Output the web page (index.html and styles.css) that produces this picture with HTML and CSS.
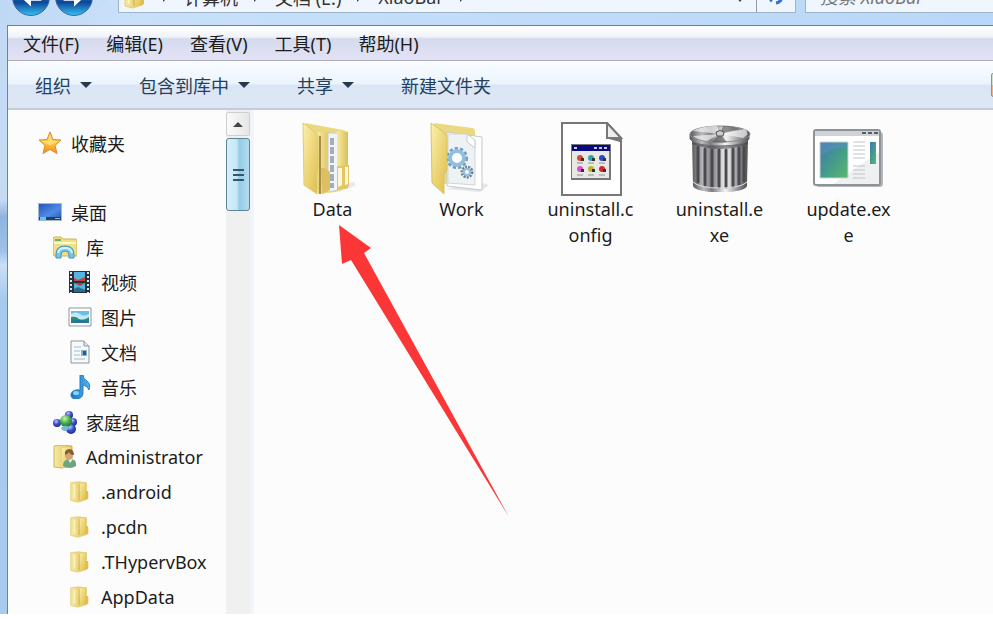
FILE: index.html
```html
<!DOCTYPE html>
<html lang="zh-CN">
<head>
    <meta charset="UTF-8">
    <meta name="viewport" content="width=device-width, initial-scale=1.0">
    <title>XiaoBar</title>
    <link rel="stylesheet" href="styles.css">
</head>
<body>
    <svg class="defs" aria-hidden="true">
        <defs>
            <linearGradient id="gold" x1="0" x2="1" y1="0" y2="1">
                <stop offset="0" stop-color="#fbf1ac"/>
                <stop offset="1" stop-color="#dfbc49"/>
            </linearGradient>
            <linearGradient id="gold-side" x1="0" x2="1">
                <stop offset="0" stop-color="#f8eaa0"/>
                <stop offset="1" stop-color="#d9bf5c"/>
            </linearGradient>
            <linearGradient id="star" x1="0" x2="0" y1="0" y2="1">
                <stop offset="0" stop-color="#ffd75a"/>
                <stop offset="0.5" stop-color="#ffc83c"/>
                <stop offset="1" stop-color="#f08a1c"/>
            </linearGradient>
            <linearGradient id="blue" x1="0" x2="1" y1="0" y2="1">
                <stop offset="0" stop-color="#2555b8"/>
                <stop offset="0.6" stop-color="#4f8be6"/>
                <stop offset="1" stop-color="#2760c0"/>
            </linearGradient>
            <linearGradient id="note" x1="0" x2="1">
                <stop offset="0" stop-color="#1672c8"/>
                <stop offset="1" stop-color="#4fb4ef"/>
            </linearGradient>
            <linearGradient id="steel" x1="0" x2="1">
                <stop offset="0" stop-color="#5a5a5c"/>
                <stop offset="0.2" stop-color="#bcbcbe"/>
                <stop offset="0.35" stop-color="#7c7c80"/>
                <stop offset="0.6" stop-color="#f4f4f4"/>
                <stop offset="0.82" stop-color="#96969a"/>
                <stop offset="1" stop-color="#505052"/>
            </linearGradient>
            <linearGradient id="scene" x1="0" x2="1" y1="0" y2="1">
                <stop offset="0" stop-color="#4577ae"/>
                <stop offset="0.5" stop-color="#439a8b"/>
                <stop offset="1" stop-color="#5cb86b"/>
            </linearGradient>
            <radialGradient id="ball" cx="0.4" cy="0.3" r="0.7">
                <stop offset="0" stop-color="#b9c6ff"/>
                <stop offset="0.5" stop-color="#3f55c8"/>
                <stop offset="1" stop-color="#1c2a8c"/>
            </radialGradient>
            <radialGradient id="ball-green" cx="0.4" cy="0.3" r="0.7">
                <stop offset="0" stop-color="#c8f5b0"/>
                <stop offset="0.6" stop-color="#3fa845"/>
                <stop offset="1" stop-color="#1f7a30"/>
            </radialGradient>
            <symbol id="i-folder" viewBox="0 0 24 26">
                <path d="M2 3l8-1 9 1v18l-9 3-8-2z" fill="url(#gold-side)" stroke="#e3ce7a"/>
                <path d="M10 4l8-1v17l-5 3-3 1z" fill="url(#gold)"/>
                <path d="M18 12h2q1 0 1 2v6l-3 2z" fill="#e2bd4d"/>
                <path d="M11 4v18" stroke="#d2a63b" stroke-width="1"/>
                <path d="M6 5v15" stroke="#fff9cf" stroke-width="2" opacity="0.7"/>
            </symbol>
        </defs>
    </svg>

    <div class="window">
        <header class="titlebar">
            <div class="nav-row">
                <button class="nav-btn" type="button" aria-label="后退">
                    <svg viewBox="0 0 38 38"><path d="M8 19l11-10v6h11v8H19v6z" fill="#fff"/></svg>
                </button>
                <button class="nav-btn" type="button" aria-label="前进">
                    <svg viewBox="0 0 38 38"><path d="M30 19L19 9v6H8v8h11v6z" fill="#fff"/></svg>
                </button>
                <button class="history-btn" type="button" aria-label="最近页面">
                    <svg viewBox="0 0 10 8"><path d="M0 1h10L5 7z" fill="#2f6aa8"/></svg>
                </button>
                <nav class="address" aria-label="地址">
                    <svg class="address-icon"><use href="#i-folder"/></svg>
                    <span class="sep"></span>
                    <a href="#computer">计算机</a>
                    <span class="sep"></span>
                    <a href="#drive">文档 (E:)</a>
                    <span class="sep"></span>
                    <a href="#xiaobar">XiaoBar</a>
                    <span class="sep"></span>
                    <button class="address-drop" type="button" aria-label="以前的位置">
                        <svg viewBox="0 0 10 8"><path d="M1 1h8L5 6z" fill="#444"/></svg>
                    </button>
                    <button class="refresh" type="button" aria-label="刷新">
                        <svg viewBox="0 0 20 20"><path d="M3 7q1-5 7-5M2 11l3 4 3-4M10 18q6-1 6-8M12 10l4-4 3 4" fill="none" stroke="#3274c4" stroke-width="3"/></svg>
                    </button>
                </nav>
                <input class="search" type="search" placeholder="搜索 XiaoBar" aria-label="搜索 XiaoBar">
            </div>
        </header>

        <div class="client">
            <div class="menubar">
                <button type="button">文件(F)</button>
                <button type="button">编辑(E)</button>
                <button type="button">查看(V)</button>
                <button type="button">工具(T)</button>
                <button type="button">帮助(H)</button>
            </div>

            <div class="toolbar">
                <button type="button">组织<span class="caret"></span></button>
                <button type="button">包含到库中<span class="caret"></span></button>
                <button type="button">共享<span class="caret"></span></button>
                <button type="button">新建文件夹</button>
                <button class="view-btn" type="button" aria-label="更改视图"></button>
            </div>

            <div class="panes">
                <aside class="sidebar">
                    <ul class="tree">
                        <li class="level-0 favorites"><a href="#favorites">
                            <svg viewBox="0 0 24 24"><path d="M12 1l3 7.500 8 .5-6 5.500 2 8-7-4-7 4 2-8L1 9l8-.5z" fill="url(#star)" stroke="#dd8a34"/><path d="M12 4l2 6 6 .5-8 4-7-4 5-.5z" fill="#ffed9a" opacity="0.6"/></svg>
                            收藏夹</a></li>
                        <li class="level-0"><a href="#desktop">
                            <svg viewBox="0 0 24 24"><path d="M0 3h24v18H0z" fill="#a6b8cf"/><path d="M1 4h22v14H1z" fill="url(#blue)"/><path d="M1 17h22v3H1z" fill="#25405c"/><path d="M2 17h6v3H2z" fill="#5fc4ee"/><path d="M17 18h5v1h-5z" fill="#9db4c9"/></svg>
                            桌面</a></li>
                        <li class="level-1"><a href="#libraries">
                            <svg viewBox="0 0 24 24"><path d="M0 4q0-2 2-2h6l2 2h12q2 0 2 2v15H2q-2 0-2-2z" fill="#f3df83" stroke="#c9b45b"/><path d="M2 4h6v2H2z" fill="#6cb56b"/><path d="M1 8h22" stroke="#fff8cc" stroke-width="2"/><path d="M3 23v-4q0-8 9-8t9 8v4h-5v-3q0-4-4-4t-4 4v3z" fill="#77c6e8" stroke="#3f97c4"/><path d="M5 18q1-5 7-5t7 5" stroke="#d5f1fc" stroke-width="2" fill="none"/></svg>
                            库</a></li>
                        <li class="level-2"><a href="#videos">
                            <svg viewBox="0 0 24 24"><path d="M1 1h21v22H1z" fill="#25333d"/><path d="M6 2h11v9H6zM6 13h11v9H6z" fill="#55b4e0"/><path d="M6 8l4 2 7-3v4H6z" fill="#c1453b"/><path d="M6 13h11l-5 3z" fill="#a8444a"/><path d="M6 19l4-2 7 3v2H6z" fill="#2c6b8f"/><path d="M3 2v21M20 2v21" stroke="#dce8ee" stroke-width="2" stroke-dasharray="2 2"/></svg>
                            视频</a></li>
                        <li class="level-2"><a href="#pictures">
                            <svg viewBox="0 0 24 24"><path d="M1 3h22v18H1z" fill="#fff" stroke="#8e979f"/><path d="M3 6h18v12H3z" fill="#67bfe9"/><path d="M3 9q5-3 9 0t9 0v5H3z" fill="#c3e8f8"/><path d="M3 12q5-1 8 2t10-2v6H3z" fill="#2c8e74"/><path d="M3 16q8-2 18 0v2H3z" fill="#2475a0"/></svg>
                            图片</a></li>
                        <li class="level-2"><a href="#documents">
                            <svg viewBox="0 0 24 24"><path d="M3 1h13l5 5v17H3z" fill="#f6f9fb" stroke="#8c979f"/><path d="M16 1v5h5" fill="#dfe5e9" stroke="#8c979f"/><path d="M6 7h7M6 11h6M6 15h6M6 19h11" stroke="#a8b9c6"/><path d="M13 10h6v6h-6z" fill="#86b5c9"/><path d="M15 11h3v4h-3z" fill="#285d84"/></svg>
                            文档</a></li>
                        <li class="level-2"><a href="#music">
                            <svg viewBox="0 0 24 24"><path d="M12 0h3q0 4 4 6 4 3 2 9-1-4-6-5v8q0 5-6 6-7 0-6-5 2-5 9-4z" fill="url(#note)" stroke="#2a7fc0"/><ellipse cx="8" cy="18" rx="3" ry="2" fill="#8ad5fa"/></svg>
                            音乐</a></li>
                        <li class="level-1"><a href="#homegroup">
                            <svg viewBox="0 0 24 24"><circle cx="16" cy="5" r="4" fill="url(#ball)"/><circle cx="4" cy="13" r="4" fill="url(#ball)"/><circle cx="20" cy="12" r="4" fill="url(#ball)"/><circle cx="18" cy="19" r="5" fill="url(#ball)"/><circle cx="13" cy="11" r="6" fill="url(#ball-green)"/><path d="M8 18q3-4 8-1-1 4-4 4t-4-3z" fill="#74b8d8"/></svg>
                            家庭组</a></li>
                        <li class="level-1"><a href="#administrator">
                            <svg viewBox="0 0 24 24"><path d="M1 1l8-1 10 1v20L9 23l-8-1z" fill="url(#gold-side)" stroke="#cfb75e"/><path d="M9 3l9-1v19l-9 2z" fill="url(#gold)"/><path d="M10 21q0-7 7-7t6 7q-6 4-13 0z" fill="#6da67a"/><path d="M15 14l2 4 3-4z" fill="#e6f0f4"/><ellipse cx="16" cy="10" rx="4" ry="5" fill="#d4a579"/><path d="M12 10q-1-6 5-6 4 1 4 6-4 0-5-3-1 2-4 3z" fill="#855b34"/></svg>
                            Administrator</a></li>
                        <li class="level-2"><a href="#android"><svg><use href="#i-folder"/></svg>.android</a></li>
                        <li class="level-2"><a href="#pcdn"><svg><use href="#i-folder"/></svg>.pcdn</a></li>
                        <li class="level-2"><a href="#thypervbox"><svg><use href="#i-folder"/></svg>.THypervBox</a></li>
                        <li class="level-2"><a href="#appdata"><svg><use href="#i-folder"/></svg>AppData</a></li>
                    </ul>
                    <div class="scrollbar">
                        <button class="scroll-up" type="button" aria-label="向上滚动"></button>
                        <div class="thumb"><span></span><span></span><span></span></div>
                    </div>
                </aside>

                <main class="files">
                    <ul class="file-list">
                        <li><a href="#data">
                            <svg viewBox="0 0 72 74">
                                <path d="M40 64l18-4v4l-16 6z" fill="#d9dcdf" opacity="0.6"/>
                                <path d="M8 1l38 7q3 0 3 4v54l-10 4-18 2z" fill="#ead880"/>
                                <path d="M20 10h12q2 0 2 3v55l-10 4z" fill="url(#gold-side)"/>
                                <path d="M23 14v58" stroke="#a68f4d" stroke-width="2"/>
                                <path d="M31 11h10v57l-10 2z" fill="#f1f4f6" stroke="#c9ced2"/>
                                <path d="M35 16v50" stroke="#a3aebb" stroke-width="4" stroke-dasharray="7 2"/>
                                <path d="M40 9h7l4 1v56l-11 3z" fill="url(#gold-side)"/>
                                <path d="M40 44l12-1v21l-12 5z" fill="#e4c762"/>
                                <path d="M41 46h4v17l-4 2zM48 45h3v17l-3 1z" fill="#fff8dc"/>
                                <path d="M24 46h4l5 4v18l-8 4z" fill="#ddc061"/>
                                <path d="M6 1l13 10q2 1 2 5v29l-1 6v21L7 63z" fill="url(#gold)" stroke="#e2cb74"/>
                            </svg>
                            <span>Data</span></a></li>
                        <li><a href="#work">
                            <svg viewBox="0 0 72 74">
                                <path d="M8 1l38 5q3 0 3 4v52H16z" fill="#ebd982"/>
                                <path d="M54 60l9 3-9 7-35-3z" fill="#d4d7db" opacity="0.6"/>
                                <path d="M21 10l35 5v53l-35-4z" fill="#fff" stroke="#c3c9ce"/>
                                <path d="M22 12h19l8 7v44l-27-2z" fill="#eff2f5" stroke="#d0d5d9"/>
                                <path d="M41 12v8l8 6v-8z" fill="#fff" stroke="#c4cacf"/>
                                <circle cx="31" cy="36" r="9" fill="none" stroke="#719bb9" stroke-width="4" stroke-dasharray="3 2"/>
                                <circle cx="31" cy="36" r="7" fill="#fff" stroke="#91bfdf" stroke-width="4"/>
                                <circle cx="41" cy="50" r="5" fill="#fff" stroke="#67849b" stroke-width="3" stroke-dasharray="2 1"/>
                                <circle cx="41" cy="50" r="3" fill="none" stroke="#92bddb" stroke-width="2"/>
                                <path d="M5 1l14 10q2 2 2 5v32l-3 4v20L6 61z" fill="url(#gold)" stroke="#dac268"/>
                            </svg>
                            <span>Work</span></a></li>
                        <li><a href="#uninstall-config">
                            <svg viewBox="0 0 72 74">
                                <path d="M7 1h45l14 15v57H7z" fill="#fff" stroke="#777" stroke-width="2"/>
                                <path d="M52 1v15h14z" fill="#eee" stroke="#777" stroke-width="2"/>
                                <path d="M54 17h11v3z" fill="#777"/>
                                <path d="M16 22h40v36H16z" fill="#777"/>
                                <path d="M17 23h37v33H17z" fill="#e9e9e4"/>
                                <path d="M17 23h38v6H17z" fill="#090982"/>
                                <path d="M19 26h3M39 26h3M44 26h3M49 26h3" stroke="#c7c7de" stroke-width="2"/>
                                <path d="M22 41h6M33 41h6M44 41h6M22 53h6M33 53h6M44 53h6" stroke="#8d8d8d"/>
                                <circle cx="25" cy="36" r="3" fill="#d64b38"/><circle cx="36" cy="36" r="3" fill="#25a8a8"/><circle cx="47" cy="36" r="3" fill="#2a48c8"/>
                                <circle cx="25" cy="47" r="3" fill="#da50ce"/><circle cx="36" cy="47" r="3" fill="#b9b32b"/><circle cx="47" cy="47" r="3" fill="#d42433"/>
                                <path d="M26 36h3v3h-3zM37 36h3v3h-3zM48 36h3v3h-3zM26 47h3v3h-3zM37 47h3v3h-3zM48 47h3v3h-3z" fill="#333"/>
                            </svg>
                            <span>uninstall.config</span></a></li>
                        <li><a href="#uninstall-exe">
                            <svg viewBox="0 0 72 74">
                                <path d="M8 15h56l-1 48q-2 7-27 7T9 63z" fill="url(#steel)"/>
                                <path d="M8 17q28 12 56 0v5q-28 10-56 0z" fill="#3c3c40" opacity="0.5"/>
                                <path d="M14 25v35M21 27v36M28 28v37M35 28v37M42 28v37M49 27v37M55 26v36M60 25v34" stroke="#4a4a50" stroke-width="3" stroke-linecap="round"/>
                                <path d="M9 60q5 7 27 7t27-7v4q-3 6-27 6T9 64z" fill="url(#steel)"/>
                                <path d="M9 60q6 6 27 6t27-6" fill="none" stroke="#dcdcdc"/>
                                <path d="M6 12h59v5q-4 7-29 7T6 17z" fill="url(#steel)" stroke="#6a6a6c"/>
                                <ellipse cx="36" cy="12" rx="30" ry="8" fill="url(#steel)" stroke="#8a8a8c"/>
                                <path d="M36 12L9 9q8-5 24-5zM36 12l25-5q6 5-2 9zM36 12l-13 7q-9-1-14-5z" fill="#f2f2f2" opacity="0.7"/>
                                <path d="M36 12l3-8q10 0 17 3zM36 12l7 8q-8 1-15 0z" fill="#4c4c50" opacity="0.6"/>
                                <path d="M32 10q4-3 8 0l-1 4h-6z" fill="#ccc" stroke="#555"/>
                            </svg>
                            <span>uninstall.exe</span></a></li>
                        <li><a href="#update-exe">
                            <svg viewBox="0 0 72 74">
                                <rect x="3" y="10" width="67" height="55" rx="3" fill="#b4b8bb"/>
                                <rect x="1" y="8" width="66" height="55" rx="2" fill="#fff" stroke="#8c9296" stroke-width="2"/>
                                <path d="M2 9h64v5H2z" fill="#ced3d7"/>
                                <path d="M49 11h4M55 11h4M61 11h4" stroke="#535d66" stroke-width="2"/>
                                <path d="M66 30v32H20z" fill="#eef0f1"/>
                                <path d="M7 20h28v36H7z" fill="url(#scene)" stroke="#c9d4d8"/>
                                <path d="M8 34q10-9 26-8v-5H8z" fill="#5690bd" opacity="0.6"/>
                                <path d="M40 20h12M40 24h12M40 28h12M40 32h12M40 36h12M40 44h12M40 48h12M40 52h12M40 56h12" stroke="#c0c5c8"/>
                                <path d="M57 20h6v22h-6z" fill="url(#scene)"/>
                            </svg>
                            <span>update.exe</span></a></li>
                    </ul>
                    <svg class="pointer" viewBox="0 0 170 292" aria-hidden="true">
                        <path d="M0 0l32 23-7 5 145 264L12 35l-9 4z" fill="#fb3636"/>
                    </svg>
                </main>
            </div>
        </div>
    </div>
</body>
</html>
```

FILE: styles.css
```css
* {
    box-sizing: border-box;
}
body {
    margin: 0;
    background-color: #ffffff;
    color: #1c1c1c;
    font-family: "Noto Sans", "Noto Sans CJK SC", sans-serif;
    font-size: 18px;
}
a {
    color: inherit;
    text-decoration: none;
}
button,
input {
    font: inherit;
    color: inherit;
    border: 0;
    padding: 0;
    background: none;
}
ul {
    list-style: none;
    margin: 0;
    padding: 0;
}
.defs {
    position: absolute;
    width: 0;
    height: 0;
}
.window {
    overflow: hidden;
    padding-left: 7px;
    background: linear-gradient(#c2daf6 0, #c6dbf3 200px, #8fb5df 216px, #9cc0e8 250px, #c9dff5 265px, #a6c9ee 300px, #a9cbee 100%);
}

/* title bar, scrolled partly out of view */
.titlebar {
    display: flex;
    align-items: flex-end;
    height: 25px;
    margin-left: -7px;
    overflow: hidden;
    background: linear-gradient(90deg, #bfd8f4, #c8e0fa 120px, #b9d7f8);
}
.nav-row {
    flex: 1;
    display: flex;
    align-items: center;
    padding: 0 0 9px 12px;
}
.nav-btn {
    width: 38px;
    height: 38px;
    margin-right: 5px;
    border: 1px solid #37689f;
    border-radius: 50%;
    background: linear-gradient(#8fb8e5, #1d5cab 50%, #0d4898 65%, #35bdf0);
}
.nav-btn svg {
    display: block;
    width: 100%;
}
.history-btn {
    width: 12px;
    margin-right: 8px;
}
.history-btn svg {
    display: block;
    width: 12px;
}
.address {
    flex: 1;
    display: flex;
    align-items: center;
    height: 32px;
    padding-left: 4px;
    border: 1px solid #9fb4c8;
    background-color: #f0f6fd;
    color: #333333;
}
.address-icon {
    width: 24px;
    height: 26px;
}
.sep {
    margin: 0 16px;
    border: 5px solid transparent;
    border-left-color: #444444;
    border-right: 0;
}
.address-drop {
    width: 32px;
    margin-left: auto;
}
.address-drop svg {
    width: 10px;
}
.refresh {
    align-self: stretch;
    width: 39px;
    border-left: 1px solid #8d9cad;
}
.refresh svg {
    width: 20px;
}
.search {
    width: 188px;
    height: 32px;
    margin-left: 9px;
    padding-left: 14px;
    border: 1px solid #9fb4c8;
    border-right: 0;
    border-radius: 0;
    background-color: #f0f6fd;
    font-style: italic;
}
.search::placeholder {
    color: #777777;
}

.client {
    border-top: 1px solid #6c7f95;
    border-left: 1px solid #6f8296;
    background-color: #fcfcfc;
}
.menubar {
    display: flex;
    align-items: center;
    gap: 27px;
    height: 35px;
    padding-left: 15px;
    border-bottom: 1px solid #a9adbf;
    background: linear-gradient(#ffffff, #f0f3fa 32%, #d5daed 38%, #e3e2f5);
}
.toolbar {
    display: flex;
    align-items: center;
    gap: 47px;
    height: 49px;
    padding-left: 27px;
    overflow: hidden;
    border-bottom: 2px solid #c3ccda;
    background: linear-gradient(#fbfdff, #ebf4fd 48%, #dbe6f5 52%, #dde7f4);
    color: #24405e;
}
.toolbar button {
    display: flex;
    flex-shrink: 0;
    align-items: center;
    gap: 9px;
}
.caret {
    border: 6px solid transparent;
    border-top-color: #26374e;
    border-bottom: 0;
}
.toolbar .view-btn {
    width: 24px;
    height: 24px;
    margin: 0 -22px 0 auto;
    border: 1px solid #8296aa;
    border-radius: 2px;
    background: linear-gradient(#cfe3cb 50%, #f4b183 50%);
}

.panes {
    display: flex;
}
.sidebar {
    display: flex;
    width: 246px;
    flex-shrink: 0;
    border-right: 4px solid #f1f5fb;
}
.tree {
    flex: 1;
    padding-top: 15px;
}
.tree a {
    display: flex;
    align-items: center;
    gap: 9px;
    height: 35px;
    white-space: nowrap;
}
.tree svg {
    width: 24px;
    height: 24px;
}
.favorites {
    margin-bottom: 34px;
}
.level-0 {
    padding-left: 30px;
}
.level-1 {
    padding-left: 45px;
}
.level-2 {
    padding-left: 60px;
}
.scrollbar {
    width: 24px;
    padding-top: 2px;
    background-color: #f0f0f1;
}
.scroll-up {
    display: flex;
    align-items: center;
    justify-content: center;
    width: 24px;
    height: 24px;
    border: 1px solid #cfcfcf;
    border-radius: 2px;
    background: linear-gradient(90deg, #fafafa, #e6e6e6);
}
.scroll-up::before {
    content: "";
    border: 5px solid transparent;
    border-bottom-color: #444444;
    border-top: 0;
}
.thumb {
    display: flex;
    flex-direction: column;
    align-items: center;
    justify-content: center;
    gap: 3px;
    height: 73px;
    margin-top: 2px;
    border: 1px solid #5b8499;
    border-radius: 3px;
    background: linear-gradient(90deg, #d9eff9, #c4e6f5 45%, #93cbe6 55%, #b4dcee);
}
.thumb span {
    width: 11px;
    height: 2px;
    background-color: #37566a;
}

.files {
    position: relative;
    flex: 1;
    padding: 12px 0 0 14px;
}
.file-list {
    display: flex;
    flex-wrap: wrap;
}
.file-list li {
    width: 129px;
}
.file-list a {
    display: flex;
    flex-direction: column;
    align-items: center;
}
.file-list svg {
    width: 72px;
    height: 74px;
}
.file-list span {
    width: 92px;
    line-height: 26px;
    text-align: center;
    word-break: break-all;
}
/* arrow lies over the file area */
.pointer {
    position: absolute;
    top: 115px;
    left: 85px;
    width: 170px;
    height: 292px;
}
```
